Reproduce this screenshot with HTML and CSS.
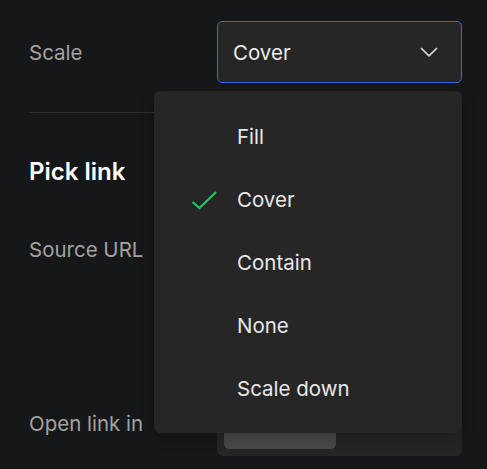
FILE: index.html
```html
<!DOCTYPE html>
<html>
<head>
<meta charset="utf-8">
<link rel="stylesheet" href="styles.css">
</head>
<body>
<div class="panel">
  <div class="row row-scale">
    <div class="label">Scale</div>
    <div class="select-wrap">
      <div class="select">
        <span class="select-value">Cover</span>
        <svg class="chevron" width="18" height="10" viewBox="0 0 18 10"><polyline points="1,1 9,8.8 17,1" fill="none" stroke="#dcdcdc" stroke-width="1.6"/></svg>
      </div>
      <div class="menu">
        <div class="item"><span class="check"></span><span>Fill</span></div>
        <div class="item"><span class="check"><svg width="26" height="20" viewBox="0 0 26 20"><polyline points="1.5,12 8.5,18 25,2" fill="none" stroke="#22c55e" stroke-width="2.2"/></svg></span><span>Cover</span></div>
        <div class="item"><span class="check"></span><span>Contain</span></div>
        <div class="item"><span class="check"></span><span>None</span></div>
        <div class="item"><span class="check"></span><span>Scale down</span></div>
      </div>
    </div>
  </div>
  <div class="divider"></div>
  <h2 class="heading">Pick link</h2>
  <div class="row row-source">
    <div class="label">Source URL</div>
    <div class="input"></div>
  </div>
  <div class="row row-open">
    <div class="label">Open link in</div>
    <div class="segmented">
      <div class="segment active"></div>
      <div class="segment"></div>
    </div>
  </div>
</div>
</body>
</html>
```

FILE: styles.css
```css
* { box-sizing: border-box; }
html, body {
  margin: 0;
  padding: 0;
  background: #161719;
  height: 100%;
  overflow: hidden;
}
body {
  font-family: Inter, "Noto Sans", sans-serif;
  font-size: 20.5px;
  color: #e8e8e8;
}
.panel {
  padding: 21px 25px 0 29px;
}
.row {
  display: grid;
  grid-template-columns: 188px 1fr;
  align-items: center;
}
.label {
  color: #a2a2a2;
  line-height: 24px;
  padding-top: 1px;
}
.select-wrap {
  position: relative;
}
.select {
  height: 62px;
  border: 1px solid #3d64dc;
  border-radius: 5px;
  background: #262626;
  display: flex;
  align-items: center;
  justify-content: space-between;
  padding: 0 23px 0 15px;
}
.select-value {
  color: #ececec;
  padding-top: 1px;
}
.chevron { display: block; }
.menu {
  position: absolute;
  top: calc(100% + 8px);
  right: 0;
  width: 308px;
  background: #262626;
  border-radius: 6px;
  padding: 13.5px 0;
  z-index: 10;
  box-shadow: 0 4px 14px rgba(0,0,0,0.25);
}
.item {
  height: 63px;
  display: flex;
  align-items: center;
  color: #e8e8e8;
  padding-top: 1px;
}
.check {
  width: 83px;
  padding-left: 37px;
  display: flex;
  align-items: center;
}
.check svg { display: block; }
.divider {
  height: 1px;
  background: #2f2f31;
  margin-top: 29px;
}
.heading {
  margin: 44px 0 0;
  font-size: 24px;
  font-weight: 600;
  line-height: 30px;
  color: #ffffff;
}
.row-source {
  margin-top: 31px;
}
.input {
  height: 62px;
  border-radius: 5px;
  background: #262626;
}
.row-open {
  margin-top: 110px;
}
.segmented {
  height: 66px;
  background: #252525;
  border-radius: 6px;
  padding: 7px;
  display: flex;
  gap: 4px;
}
.segment {
  width: 112px;
  border-radius: 5px;
}
.segment.active {
  background: #484848;
}
```
